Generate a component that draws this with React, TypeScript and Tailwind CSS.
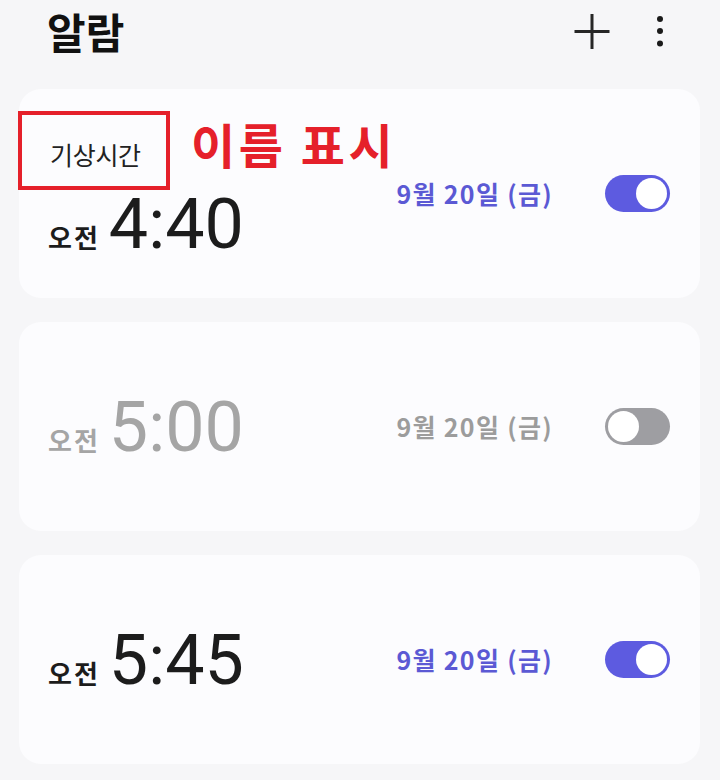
import React from "react";

const KR = { fontFamily: '"Noto Sans CJK KR", "Noto Sans", sans-serif' };
const RB = { fontFamily: 'Roboto, "Noto Sans", sans-serif' };

function Toggle({ on }: { on: boolean }) {
  return (
    <div
      className={
        "w-[65px] h-[37px] rounded-full p-[3px] flex " +
        (on ? "bg-[#5d5be0] justify-end" : "bg-[#9e9ea2] justify-start")
      }
    >
      <div className="w-[31px] h-[31px] rounded-full bg-white" />
    </div>
  );
}

function TimeRow({ time, on }: { time: string; on: boolean }) {
  return (
    <div className="flex items-baseline">
      <span
        style={KR}
        className={
          "text-[26px] font-bold leading-none tracking-[2px] " + (on ? "text-[#1c1c1c]" : "text-[#a5a5a5]")
        }
      >
        오전
      </span>
      <span
        style={RB}
        className={"ml-[9px] text-[70px] leading-none font-normal " + (on ? "text-[#1c1c1c]" : "text-[#a5a5a5]")}
      >
        {time}
      </span>
    </div>
  );
}

function Right({ on }: { on: boolean }) {
  return (
    <div className="ml-auto flex items-center">
      <span
        style={KR}
        className={"text-[25px] font-bold tracking-[1.3px] " + (on ? "text-[#5b59d4]" : "text-[#9c9c9c]")}
      >
        9월 20일 (금)
      </span>
      <div className="ml-[52px]">
        <Toggle on={on} />
      </div>
    </div>
  );
}

export default function App() {
  return (
    <div className="w-[720px] h-[780px] bg-[#f6f6f8] overflow-hidden">
      <div className="h-[62px] flex items-center pl-[47px] pr-[56px]">
        <span style={KR} className="text-[42px] font-bold text-[#111] leading-none">
          알람
        </span>
        <div className="ml-auto flex items-center">
          <svg width="38" height="38" viewBox="0 0 38 38" className="mr-[45px]">
            <path d="M19 2v35M1.5 19.5h35" stroke="#262626" strokeWidth="3" />
          </svg>
          <svg width="8" height="32" viewBox="0 0 8 32">
            <circle cx="4" cy="4" r="3" fill="#1a1a1a" />
            <circle cx="4" cy="16" r="3" fill="#1a1a1a" />
            <circle cx="4" cy="28.5" r="3" fill="#1a1a1a" />
          </svg>
        </div>
      </div>

      <div className="mt-[27px] pl-[19px] pr-[20px] flex flex-col gap-[24px]">
        <div className="relative h-[209px] rounded-[22px] bg-[#fcfcfe] flex items-center pr-[30px]">
          <div className="self-start pt-[22px] flex flex-col">
            <div className="-ml-[1px] w-[152px] h-[79px] border-4 border-[#e5202a] flex items-center pl-[28px] pt-[8px]">
              <span style={KR} className="text-[25px] text-[#222] leading-none tracking-[-0.3px]">
                기상시간
              </span>
            </div>
            <div className="-mt-[1px] pl-[29px]">
              <TimeRow time="4:40" on />
            </div>
          </div>
          <span
            style={KR}
            className="absolute left-[172px] top-[27px] text-[48px] leading-[54px] font-bold tracking-[3.5px] text-[#e5202a]"
          >
            이름 표시
          </span>
          <Right on />
        </div>

        <div className="h-[209px] rounded-[22px] bg-[#fcfcfe] flex items-center pl-[29px] pr-[30px]">
          <TimeRow time="5:00" on={false} />
          <Right on={false} />
        </div>

        <div className="h-[209px] rounded-[22px] bg-[#fcfcfe] flex items-center pl-[29px] pr-[30px]">
          <TimeRow time="5:45" on />
          <Right on />
        </div>
      </div>
    </div>
  );
}
